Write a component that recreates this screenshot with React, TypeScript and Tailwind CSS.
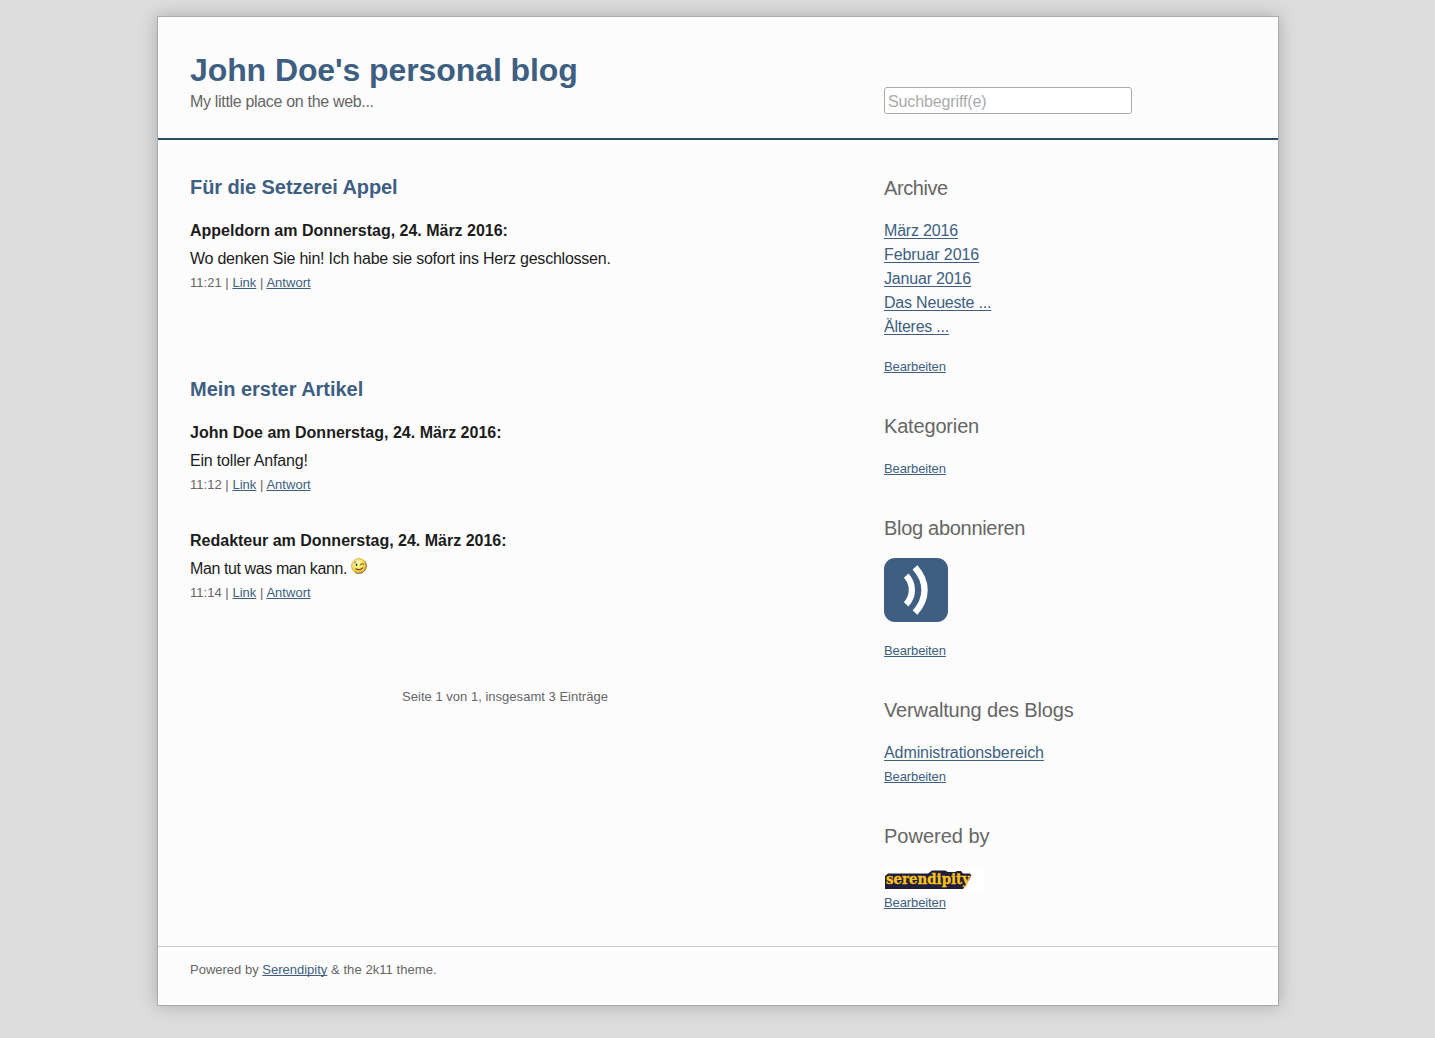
import type { ReactNode } from "react";

const linkStyle = "text-[#3e5f81] underline decoration-1 [text-decoration-skip-ink:none]";

function Link({ children, large = false }: { children: ReactNode; large?: boolean }) {
  return (
    <a href="#" className={`${linkStyle} ${large ? "underline-offset-2" : "underline-offset-1"}`}>
      {children}
    </a>
  );
}

function Comment({
  title,
  titleClass,
  time,
  bodyClass,
  children,
}: {
  title: string;
  titleClass: string;
  time: string;
  bodyClass: string;
  children: ReactNode;
}) {
  return (
    <article>
      <h3 className={`mb-1 font-bold ${titleClass}`}>{title}</h3>
      <div className={bodyClass}>{children}</div>
      <p className="text-[13px] leading-6 tracking-[0.03px] text-[#666]">
        {time} | <Link>Link</Link> | <Link>Antwort</Link>
      </p>
    </article>
  );
}

function Edit() {
  return (
    <div className="text-[13px] leading-6 tracking-[-0.1px]">
      <Link>Bearbeiten</Link>
    </div>
  );
}

function Widget({ title, titleClass, children }: { title: string; titleClass: string; children: ReactNode }) {
  return (
    <section>
      <h3 className={`-mt-px mb-[19px] text-xl leading-6 text-[#666] ${titleClass}`}>{title}</h3>
      {children}
    </section>
  );
}

function Wink() {
  return (
    <svg className="ml-1 inline-block size-4 align-[0px]" viewBox="0 0 16 16">
      <defs>
        <radialGradient id="face" cx="0.38" cy="0.32" r="0.7">
          <stop offset="0" stopColor="#fffbd0" />
          <stop offset="0.5" stopColor="#ffe558" />
          <stop offset="1" stopColor="#f0b42a" />
        </radialGradient>
      </defs>
      <circle cx="8" cy="8" r="7.4" fill="url(#face)" stroke="#d9aa45" strokeWidth="0.9" />
      <path d="M13.7 3.3A7.4 7.4 0 0 1 4 14.2" fill="none" stroke="#7a6a58" strokeWidth="0.9" />
      <path d="M3.2 5l2-1.4M9 7l2-1.3 2 .5" fill="none" stroke="#5b4f48" strokeWidth="1" />
      <ellipse cx="5.5" cy="6.8" rx="0.9" ry="1.2" fill="#2d3555" />
      <path d="M4.5 10.5c2 1.8 5.5 1.6 7.5-1" fill="none" stroke="#5b4f48" strokeWidth="1.2" />
    </svg>
  );
}

function FeedIcon() {
  return (
    <svg className="block size-16" viewBox="0 0 64 64">
      <rect width="64" height="64" rx="11" fill="#3e5f81" />
      <path d="M22.2 17.7C29.8 26 29.8 38 22.2 46.3" fill="none" stroke="#fff" strokeWidth="6.2" />
      <path d="M31 9.3C43.7 23.5 43.7 40.5 31 54.7" fill="none" stroke="#fff" strokeWidth="6.4" />
    </svg>
  );
}

function SerendipityLogo() {
  return (
    <svg className="block h-[22px] w-[100px] overflow-visible" viewBox="0 0 100 22">
      <rect width="100" height="22" rx="3" fill="#fff" />
      <path
        d="M1 8L4 5.5H44L48 2.5H61L64 4H71L73 3H77L79 5.5H86L87.5 7.5L82 17L79 21H1Z"
        fill="#1f1f3a"
      />
      <text
        x="2"
        y="16"
        textLength="84"
        lengthAdjust="spacingAndGlyphs"
        fontFamily="'DejaVu Serif', serif"
        fontWeight="700"
        fontSize="15.5"
        fill="#fdc31c"
        stroke="#fdc31c"
        strokeWidth="0.3"
      >
        serendipity
      </text>
    </svg>
  );
}

const archive = [
  { label: "März 2016", cls: "tracking-[-0.18px]" },
  { label: "Februar 2016", cls: "tracking-[-0.08px]" },
  { label: "Januar 2016", cls: "tracking-[-0.18px]" },
  { label: "Das Neueste ...", cls: "tracking-[-0.2px]" },
  { label: "Älteres ...", cls: "tracking-[-0.24px]" },
];

export default function App() {
  return (
    <div className="h-[1038px] overflow-hidden bg-[#ddd] pt-4 font-['Liberation_Sans',Arial,sans-serif] text-base leading-6 text-[#1c1c1c]">
      <div className="ml-[157px] flex h-[990px] w-[1122px] flex-col border border-[#aaa] bg-[#fcfcfc] shadow-[0_0_16px_#aaa]">
        <header className="flex h-[123px] shrink-0 border-b-2 border-[#2b4a68] pl-8">
          <div className="w-[694px] pt-[33px]">
            <h1 className="text-[32px] font-bold leading-10 tracking-[-0.09px] text-[#3e5f81]">
              <a href="#">John Doe's personal blog</a>
            </h1>
            <p className="tracking-[-0.32px] text-[#666]">My little place on the web...</p>
          </div>
          <form className="pt-[70px]">
            <input
              type="search"
              placeholder="Suchbegriff(e)"
              className="block h-[27px] w-[248px] rounded-[3px] border border-[#aaa] bg-white px-[3px] pt-[3px] tracking-[-0.12px] placeholder:text-[#aaa] placeholder:opacity-100"
            />
          </form>
        </header>

        <div className="flex h-[806px] shrink-0 pl-8">
          <main className="mr-16 w-[630px] pt-[35px]">
            <h2 className="mb-5 text-xl font-bold leading-6 tracking-[-0.08px] text-[#3e5f81]">
              <a href="#">Für die Setzerei Appel</a>
            </h2>
            <Comment
              title="Appeldorn am Donnerstag, 24. März 2016:"
              titleClass="tracking-[-0.01px]"
              time="11:21"
              bodyClass="tracking-[-0.233px]"
            >
              Wo denken Sie hin! Ich habe sie sofort ins Herz geschlossen.
            </Comment>
            <h2 className="mb-5 mt-[82px] text-xl font-bold leading-6 tracking-[-0.03px] text-[#3e5f81]">
              <a href="#">Mein erster Artikel</a>
            </h2>
            <div className="flex flex-col gap-8">
              <Comment
                title="John Doe am Donnerstag, 24. März 2016:"
                titleClass="tracking-[0.01px]"
                time="11:12"
                bodyClass="tracking-[-0.18px]"
              >
                Ein toller Anfang!
              </Comment>
              <Comment
                title="Redakteur am Donnerstag, 24. März 2016:"
                titleClass=""
                time="11:14"
                bodyClass="h-6 tracking-[-0.4px]"
              >
                Man tut was man kann.
                <Wink />
              </Comment>
            </div>
            <p className="mt-20 text-center text-[13px] leading-6 tracking-[0.02px] text-[#666]">
              Seite 1 von 1, insgesamt 3 Einträge
            </p>
          </main>

          <aside className="flex w-[362px] flex-col gap-9 pt-[37px]">
            <Widget title="Archive" titleClass="tracking-[-0.43px]">
              <ul className="mb-4">
                {archive.map((item) => (
                  <li key={item.label} className={item.cls}>
                    <Link large>{item.label}</Link>
                  </li>
                ))}
              </ul>
              <Edit />
            </Widget>
            <Widget title="Kategorien" titleClass="tracking-[-0.17px]">
              <Edit />
            </Widget>
            <Widget title="Blog abonnieren" titleClass="tracking-[-0.3px]">
              <a href="#" className="-mt-px mb-[17px] block">
                <FeedIcon />
              </a>
              <Edit />
            </Widget>
            <Widget title="Verwaltung des Blogs" titleClass="tracking-[-0.14px]">
              <div className="tracking-[-0.09px]">
                <Link large>Administrationsbereich</Link>
              </div>
              <Edit />
            </Widget>
            <Widget title="Powered by" titleClass="">
              <a href="#" className="block py-px">
                <SerendipityLogo />
              </a>
              <Edit />
            </Widget>
          </aside>
        </div>

        <footer className="grow border-t border-[#ccc] pl-8 pt-[11px] text-[13px] leading-6 text-[#666]">
          Powered by <Link>Serendipity</Link>
          <span className="tracking-[0.07px]"> &amp; the 2k11 theme.</span>
        </footer>
      </div>
    </div>
  );
}
